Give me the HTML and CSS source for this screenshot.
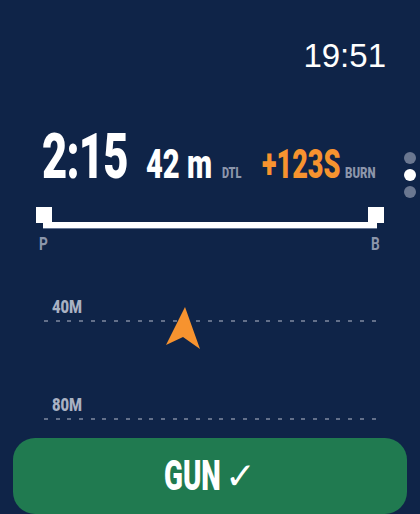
FILE: index.html
```html
<!DOCTYPE html>
<html>
<head>
<meta charset="utf-8">
<link rel="stylesheet" href="styles.css">
</head>
<body>
<div class="screen">
  <div class="status"><span class="time">19:51</span></div>

  <div class="stats">
    <span class="elapsed">2:15</span>
    <span class="dist">42 m</span>
    <span class="unit dtl">DTL</span>
    <span class="burn">+123S</span>
    <span class="unit burn-label">BURN</span>
  </div>

  <div class="pager">
    <span class="dot"></span>
    <span class="dot active"></span>
    <span class="dot"></span>
  </div>

  <div class="track">
    <span class="cap"></span>
    <span class="bar"></span>
    <span class="cap"></span>
  </div>
  <div class="track-labels">
    <span class="end">P</span>
    <span class="end">B</span>
  </div>

  <div class="chart">
    <div class="depth">
      <span class="depth-label">40M</span>
      <div class="dots"></div>
    </div>
    <div class="depth second">
      <span class="depth-label">80M</span>
      <div class="dots"></div>
    </div>
    <svg class="arrow" width="40" height="46" viewBox="0 0 40 46">
      <polygon points="20,1 35,43 18,31 1,39" fill="#f7932f"/>
    </svg>
  </div>

  <div class="gun"><span class="gun-text">GUN</span><span class="check">✓</span></div>
</div>
</body>
</html>
```
FILE: styles.css
```css
html, body {
  margin: 0;
  padding: 0;
  background: #0f2448;
}
.screen {
  position: relative;
  width: 420px;
  height: 514px;
  overflow: hidden;
  display: flex;
  flex-direction: column;
  font-family: Roboto, "Liberation Sans", sans-serif;
  font-weight: 700;
  color: #fff;
}
.status {
  display: flex;
  justify-content: flex-end;
  padding: 39px 34px 0 0;
}
.time {
  font-family: "Liberation Sans", Arial, sans-serif;
  font-weight: 400;
  font-size: 33px;
  line-height: 1;
}

/* condensed look: text squeezed horizontally; layout width set per item */
.stats {
  display: flex;
  align-items: baseline;
  padding-left: 42px;
  margin-top: 53px;
  line-height: 1;
  white-space: nowrap;
}
.stats > span {
  display: inline-block;
  transform-origin: 0 0;
  flex: none;
}
.elapsed {
  font-size: 63px;
  font-weight: 900;
  width: 104px;
  transform: scaleX(0.69);
  letter-spacing: -1px;
}
.dist {
  font-size: 41px;
  font-weight: 900;
  width: 76px;
  transform: scaleX(0.71);
}
.burn {
  font-size: 41px;
  font-weight: 900;
  color: #f7932f;
  width: 83px;
  transform: scaleX(0.66);
}
.unit {
  font-size: 14px;
  font-weight: 900;
  color: #8c96ab;
}
.dtl {
  width: 40px;
  transform: scaleX(0.78);
}
.burn-label {
  width: 40px;
  transform: scaleX(0.82);
}

.pager {
  position: absolute;
  left: 404px;
  top: 152px;
  display: flex;
  flex-direction: column;
  gap: 5px;
}
.dot {
  width: 12px;
  height: 12px;
  border-radius: 50%;
  background: #6a7790;
}
.dot.active {
  background: #fff;
}

.track {
  display: flex;
  align-items: flex-start;
  margin: 19px 36px 0;
  height: 21px;
}
.cap {
  width: 16px;
  height: 16px;
  background: #fff;
  flex: none;
}
.bar {
  flex: 1;
  height: 6px;
  margin: 15px -9px 0;
  background: #fff;
  box-shadow: 0 1px 0 rgba(160, 175, 200, 0.6);
}
.track-labels {
  display: flex;
  justify-content: space-between;
  padding: 0 38px 0 39px;
  margin-top: 5.5px;
  font-size: 19px;
  line-height: 1;
  color: #8c96ab;
}
.end {
  display: inline-block;
  width: 11px;
  transform: scaleX(0.72);
  transform-origin: 0 0;
}

.chart {
  position: relative;
  padding: 0 43px 0 44px;
  margin-top: 45px;
}
.depth {
  display: flex;
  flex-direction: column;
  align-items: flex-start;
}
.depth.second {
  margin-top: 73.5px;
}
.depth-label {
  font-size: 18px;
  font-weight: 900;
  line-height: 1;
  color: #a9b1c2;
  margin-left: 8px;
  transform: scaleX(0.82);
  transform-origin: 0 0;
}
.dots {
  align-self: stretch;
  height: 2px;
  margin-top: 4.5px;
  background: repeating-linear-gradient(90deg, #63708a 0 4px, transparent 4px 11.7px);
}
.arrow {
  position: absolute;
  left: 165px;
  top: 8.5px;
}

.gun {
  margin: auto 13px 0;
  height: 76px;
  border-radius: 22px;
  background: #207a50;
  display: flex;
  align-items: center;
  justify-content: center;
  line-height: 1;
  white-space: nowrap;
}
.gun-text {
  display: inline-block;
  font-size: 42px;
  font-weight: 900;
  width: 61px;
  transform: scaleX(0.66);
  transform-origin: 0 50%;
}
.check {
  font-family: "DejaVu Sans", sans-serif;
  font-weight: 400;
  font-size: 37px;
}
```
